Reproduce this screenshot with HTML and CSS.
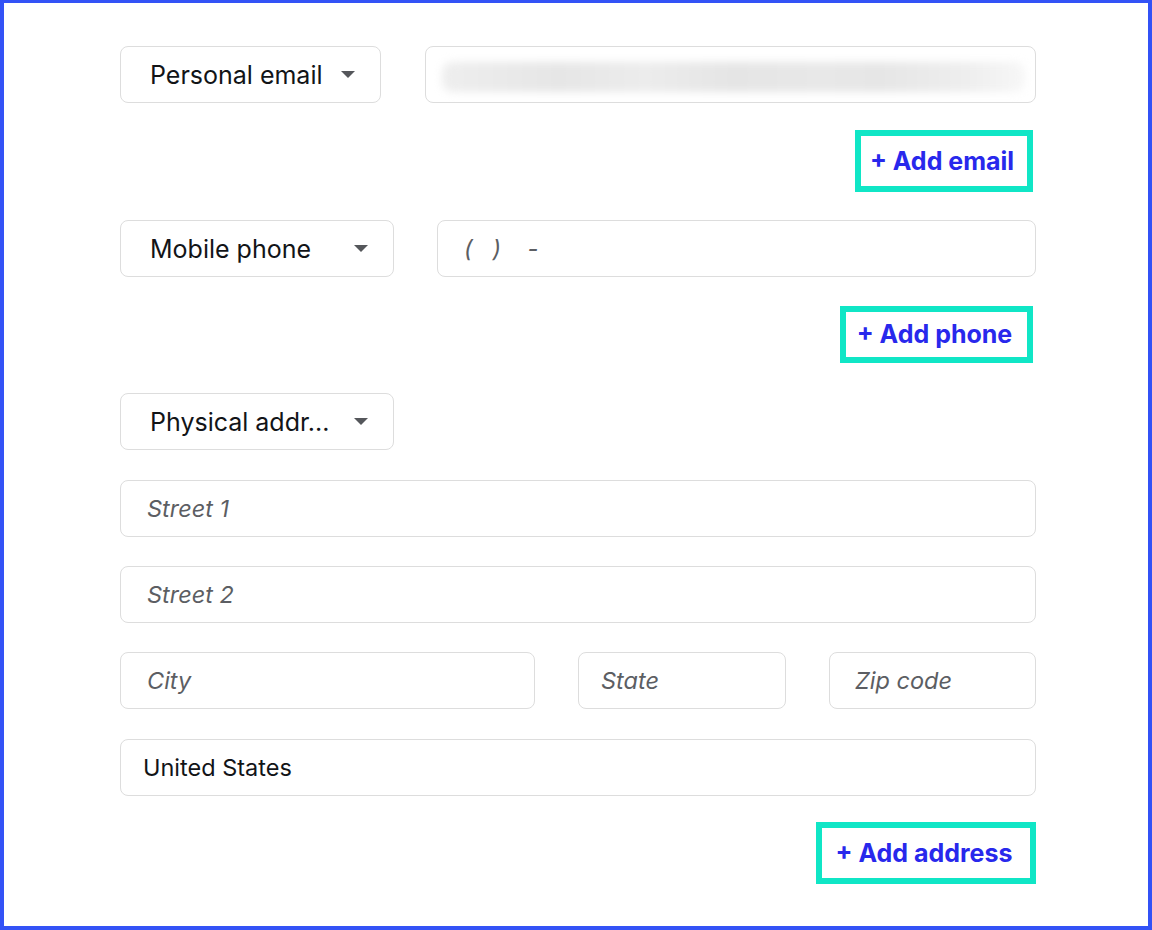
FILE: index.html
```html
<!DOCTYPE html>
<html lang="en">
<head>
<meta charset="utf-8">
<title>Contact info</title>
<link rel="stylesheet" href="styles.css">
</head>
<body>
<div class="frame">
  <div class="form">
    <div class="row row-email">
      <div class="select sel-email"><span class="select-label">Personal email</span><span class="caret"></span></div>
      <div class="field field-grow"><div class="blurred"></div></div>
    </div>
    <div class="add-row add-email-row">
      <button class="add-btn add-email">+ Add email</button>
    </div>
    <div class="row row-phone">
      <div class="select sel-wide"><span class="select-label">Mobile phone</span><span class="caret"></span></div>
      <div class="field field-grow field-phone"><span class="ph phone-mask">(&nbsp;&nbsp;&nbsp;)&nbsp;&nbsp;&nbsp;&nbsp;-</span></div>
    </div>
    <div class="add-row add-phone-row">
      <button class="add-btn add-phone">+ Add phone</button>
    </div>
    <div class="row row-addr-type">
      <div class="select sel-wide"><span class="select-label">Physical addr...</span><span class="caret"></span></div>
    </div>
    <div class="field field-full street1"><span class="ph">Street 1</span></div>
    <div class="field field-full street2"><span class="ph">Street 2</span></div>
    <div class="row row-city">
      <div class="field field-city"><span class="ph">City</span></div>
      <div class="field field-state"><span class="ph">State</span></div>
      <div class="field field-zip"><span class="ph">Zip code</span></div>
    </div>
    <div class="field field-full field-country"><span class="value">United States</span></div>
    <div class="add-row add-address-row">
      <button class="add-btn add-address">+ Add address</button>
    </div>
  </div>
</div>
</body>
</html>
```
FILE: styles.css
```css
* { box-sizing: border-box; }
html, body { margin: 0; padding: 0; }
body {
  width: 1152px;
  height: 930px;
  background: #ffffff;
  font-family: Inter, "Noto Sans", "Liberation Sans", sans-serif;
  color: #121417;
}
.frame {
  width: 1152px;
  height: 930px;
  border: 4px solid #3352f6;
  border-top-width: 3px;
  padding: 43px 0 0 116px;
}
.form {
  width: 916px;
  display: flex;
  flex-direction: column;
}
.row {
  display: flex;
  align-items: stretch;
}
.select, .field {
  height: 57px;
  border: 1px solid #dddddd;
  border-radius: 8px;
  background: #fff;
  display: flex;
  align-items: center;
}
.select {
  justify-content: space-between;
  padding: 0 25px 0 29px;
  font-size: 25px;
  color: #121417;
}
.sel-email { width: 261px; }
.sel-wide { width: 274px; }
.caret {
  width: 0;
  height: 0;
  border-left: 7px solid transparent;
  border-right: 7px solid transparent;
  border-top: 7px solid #55575b;
}
.row-email { gap: 44px; }
.row-phone { gap: 43px; margin-top: 28px; }
.field-grow { flex: 1; padding: 0 10px 0 16px; }
.blurred {
  flex: 1;
  height: 30px;
  margin-top: 4px;
  background: linear-gradient(90deg, #eeeeee 0%, #e6e6e6 20%, #ececec 35%, #e5e5e5 50%, #e8e8e8 65%, #e6e6e6 75%, #eeeeee 90%, #f7f7f7 100%);
  filter: blur(4px);
  border-radius: 10px;
}
.field-phone { padding-left: 26px; }
.ph {
  font-style: italic;
  font-size: 23.5px;
  color: #5c5e63;
}
.value {
  font-size: 23.5px;
  color: #121417;
}
.add-row {
  display: flex;
  justify-content: flex-end;
}
.add-btn {
  font-family: Inter, "Noto Sans", "Liberation Sans", sans-serif;
  font-weight: 700;
  font-size: 25px;
  color: #2828ec;
  background: #fff;
  border: 6px solid #10e6c6;
  height: 62px;
  padding: 0 4px 0 0;
  margin: 0;
  line-height: 1;
  cursor: pointer;
}
.add-email-row { margin-top: 27px; margin-right: 3px; }
.add-email { width: 178px; }
.add-phone-row { margin-top: 29px; margin-right: 3px; }
.add-phone { width: 193px; height: 57px; }
.row-addr-type { margin-top: 30px; }
.field-full { width: 916px; padding-left: 26px; }
.street1 { margin-top: 30px; }
.street2 { margin-top: 29px; }
.row-city { margin-top: 29px; gap: 43px; }
.field-city { width: 415px; padding-left: 26px; }
.field-state { width: 208px; padding-left: 22px; }
.field-zip { width: 207px; padding-left: 25px; }
.field-country { margin-top: 30px; padding-left: 22px; }
.add-address-row { margin-top: 26px; margin-right: 0; }
.add-address { width: 220px; height: 62px; }
```
